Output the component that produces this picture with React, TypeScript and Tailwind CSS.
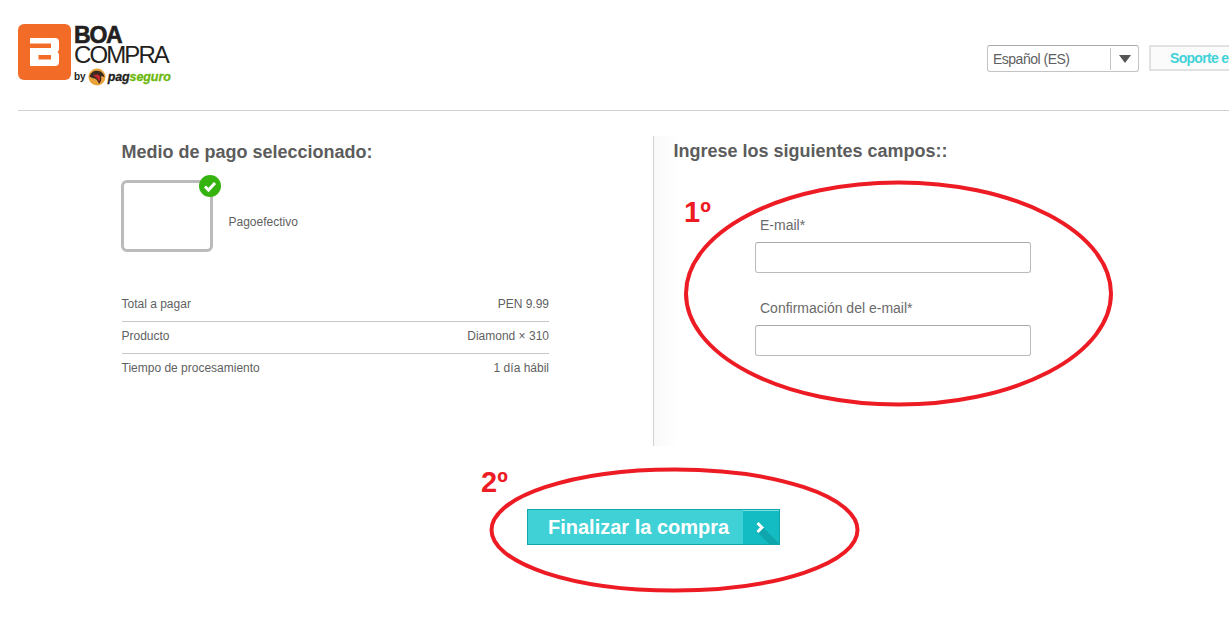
import React from "react";

const font = "font-['Liberation_Sans',Arial,sans-serif]";

const Logo = () => {
  return (
    <div className="flex items-start gap-[3px]">
      <svg width="53" height="56" viewBox="0 0 53 56" className="shrink-0">
        <rect width="53" height="56" rx="6" fill="#f36c27" />
        <path
          fillRule="evenodd"
          fill="#ffffff"
          d="M12 14H37Q41 14 41 18V25Q41 27 39.500 28Q41 29 41 31V38Q41 42 37 42H12V24H33V19.500H12ZM20.500 31H33V35.500H20.500Z"
        />
      </svg>
      <div className="flex flex-col">
        <span className="text-[23px] leading-[23px] font-bold tracking-[-1.200px] text-[#231f20] [-webkit-text-stroke:0.6px_#231f20]">BOA</span>
        <span className="text-[24px] leading-[16px] tracking-[-1.900px] text-[#231f20]">COMPRA</span>
        <div className="flex items-center mt-[5px]">
          <span className="text-[10px] leading-none font-bold text-[#231f20] mr-[2px]">by</span>
          <svg width="18" height="18" viewBox="0 0 18 18" className="shrink-0">
            <circle cx="9" cy="9" r="8.500" fill="#e8a33a" />
            <path d="M1.500 8.500C3 3.500 7 2 11 3c3 .8 5 3 5.500 6l-3.500-1c.8 3 0 6-2 8-1-2.500-2-4.500-4-5.500-2-.6-4-.6-5.500-2z" fill="#3a2a20" />
            <path d="M5 7.500c2.500-1.500 6-1.500 7 1 .5 2 0 3.500-1 5.500-1-3-2.500-5-6-6.500z" fill="#c1272d" />
          </svg>
          <span className="text-[12.500px] leading-none font-bold italic text-[#231f20] ml-[2px] tracking-[-0.1px] [-webkit-text-stroke:0.3px_currentColor]">
            pag<span className="text-[#6cb80c]">seguro</span>
          </span>
        </div>
      </div>
    </div>
  );
};

const Row = ({ label, value, last }: { label: string; value: string; last?: boolean }) => {
  return (
    <div className={`flex justify-between items-center h-8 pb-[4px] text-xs text-[#5f5f5f] ${last ? "" : "border-b border-[#c8c8c8]"}`}>
      <span>{label}</span>
      <span>{value}</span>
    </div>
  );
};

const Field = ({ label }: { label: string }) => {
  return (
    <div>
      <label className="block text-sm leading-4 text-[#6a6a6a] pl-[5px]">{label}</label>
      <input className="block mt-[9px] w-[276px] h-[31px] bg-white border border-[#bbbbbb] border-t-[#a8a8a8] rounded-[3px]" />
    </div>
  );
};

export default function App() {
  return (
    <div className={`relative w-[1229px] h-[623px] overflow-hidden bg-white ${font}`}>
      {/* Header */}
      <header className="ml-[18px] h-[111px] border-b border-[#d2d2d2] pt-6 flex justify-between">
        <Logo />
        <div className="flex items-start gap-[10px] pt-[21px] -mr-[100px] w-[342px] shrink-0">
          <div className="flex items-center w-[152px] h-[27px] shrink-0 border border-[#c4c4c4] border-t-[#a8a8a8] rounded-[3px] text-sm tracking-[-0.5px] text-[#5f5f5f] pl-[5px]">
            <span className="flex-1 pt-px">Español (ES)</span>
            <span className="flex items-center justify-center w-[28px] h-[22px] border-l border-[#c4c4c4]">
              <span className="w-0 h-0 mt-[1px] border-l-[6px] border-r-[6px] border-t-[8px] border-l-transparent border-r-transparent border-t-[#555555]" />
            </span>
          </div>
          <div className="w-[180px] h-[26px] shrink-0 border-2 border-[#e2e2e2] border-r-0 bg-[#fbfbfb] text-sm font-bold tracking-[-0.7px] text-[#41d2d8] pl-[19px] leading-[22px] whitespace-nowrap">
            Soporte en línea
          </div>
        </div>
      </header>

      {/* Main */}
      <main className="flex mt-[25px] ml-[121px]">
        <section className="w-[428px] pt-[5px]">
          <h2 className="text-lg leading-[22px] font-bold text-[#5c5c5c] pl-[0.5px]">Medio de pago seleccionado:</h2>
          <div className="flex items-center mt-[17px]">
            <div className="relative w-[92px] h-[72px] border-[3px] border-[#bbbbbb] rounded-[6px]">
              <svg width="22" height="22" viewBox="0 0 22 22" className="absolute -top-[8px] -right-[11px]">
                <circle cx="11" cy="11" r="11" fill="#35b30f" />
                <path d="M6 11.500l3.500 3.500 6.500-7" fill="none" stroke="#ffffff" strokeWidth="3" />
              </svg>
            </div>
            <span className="ml-[15.500px] mt-[12px] text-xs text-[#5f5f5f]">Pagoefectivo</span>
          </div>
          <div className="mt-[38px] pl-[0.5px]">
            <Row label="Total a pagar" value="PEN 9.99" />
            <Row label="Producto" value="Diamond × 310" />
            <Row label="Tiempo de procesamiento" value="1 día hábil" last />
          </div>
        </section>

        <section className="ml-[104px] h-[310px] border-l border-[#d2d2d2] pl-[19.500px] pt-[4px] bg-gradient-to-r from-[#f9f9f9] to-white to-[25px]">
          <h2 className="text-lg leading-[22px] font-bold text-[#5c5c5c]">Ingrese los siguientes campos::</h2>
          <div className="flex flex-col gap-[27px] mt-[55px] ml-[81.500px]">
            <Field label="E-mail*" />
            <Field label="Confirmación del e-mail*" />
          </div>
        </section>
      </main>

      {/* Submit */}
      <button className="flex items-center ml-[527px] mt-[63px] w-[253px] h-[36px] bg-[#3fd1d6] border border-[#12a5ab] text-xl font-bold text-white overflow-hidden">
        <span className="w-[215px] pl-[20px] text-left whitespace-nowrap">Finalizar la compra</span>
        <span className="flex-1 h-full border-t border-[#7fdfe2]">
          <svg width="36" height="33" viewBox="0 0 36 33" className="block">
            <rect width="36" height="33" fill="#13bcc2" />
            <path d="M20 16.500L36 32.500V33H26L13 20Z" fill="#0fa5ac" />
            <path d="M14.500 12L19 16.500 14.500 21" fill="none" stroke="#ffffff" strokeWidth="3" />
          </svg>
        </span>
      </button>

      {/* Annotations drawn over the page */}
      <svg className="absolute left-0 top-0 pointer-events-none" width="1229" height="623">
        <ellipse cx="898.500" cy="293.500" rx="212.500" ry="111" fill="none" stroke="#ed1c24" strokeWidth="4" />
        <ellipse cx="674.500" cy="530" rx="183" ry="60.500" fill="none" stroke="#ed1c24" strokeWidth="4" />
      </svg>
      <span className="absolute left-[684px] top-[195px] text-[29px] leading-[34px] font-bold text-[#ed1c24]">1º</span>
      <span className="absolute left-[481px] top-[465px] text-[29px] leading-[34px] font-bold text-[#ed1c24]">2º</span>
    </div>
  );
}
